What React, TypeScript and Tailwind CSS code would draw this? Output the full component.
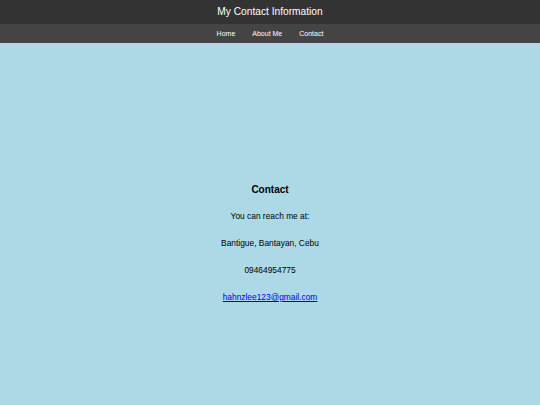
export default function App() {
  return (
    <div className="min-h-[405px] bg-[#add8e6] font-['Liberation_Sans',Arial,sans-serif]">
      <header className="bg-[#333333] text-white">
        <h1 className="h-[24px] flex items-center justify-center text-[10.2px] leading-none">My Contact Information</h1>
        <nav className="h-[19px] bg-[#444444] flex items-center justify-center gap-[17px] text-[7px] leading-none">
          <a href="#">Home</a>
          <a href="#">About Me</a>
          <a href="#">Contact</a>
        </nav>
      </header>
      <main className="flex flex-col items-center pt-[140px] text-[8.4px] leading-[11px] text-black">
        <h2 className="text-[10px] leading-[13px] font-bold mb-[15px]">Contact</h2>
        <p className="mb-[16px]">You can reach me at:</p>
        <p className="mb-[16px]">Bantigue, Bantayan, Cebu</p>
        <p className="mb-[16px]">09464954775</p>
        <a href="#" className="text-[#0000ee] underline">hahnzlee123@gmail.com</a>
      </main>
    </div>
  )
}
